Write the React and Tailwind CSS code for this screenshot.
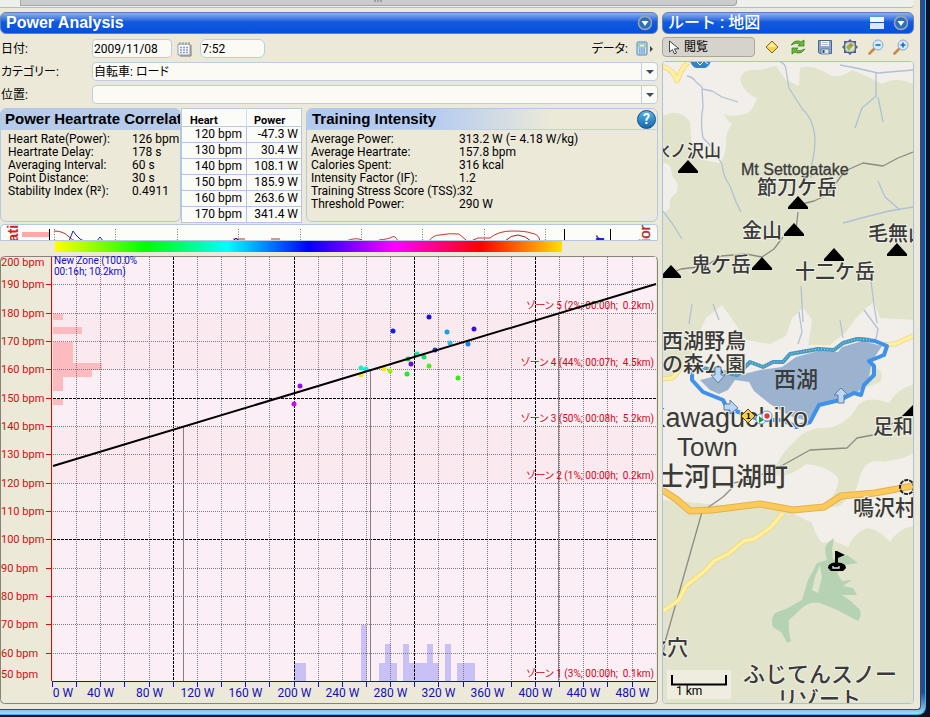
import React, { useState } from 'react';

const PLOT_LEFT = 52.5;
const PLOT_BOTTOM = 681.5;

const wattX = (w) => Math.floor(PLOT_LEFT + w * 1.2075) + 0.5;
const bpmY = (b) => Math.floor(PLOT_BOTTOM - (b - 50) * 2.833) + 0.5;

const correlation = [
  ['Heart Rate(Power):', '126 bpm'],
  ['Heartrate Delay:', '178 s'],
  ['Averaging Interval:', '60 s'],
  ['Point Distance:', '30 s'],
  ['Stability Index (R²):', '0.4911'],
];

const heartPower = [
  ['120 bpm', '-47.3 W'],
  ['130 bpm', '30.4 W'],
  ['140 bpm', '108.1 W'],
  ['150 bpm', '185.9 W'],
  ['160 bpm', '263.6 W'],
  ['170 bpm', '341.4 W'],
];

const intensity = [
  ['Average Power:', '313.2 W (= 4.18 W/kg)'],
  ['Average Heartrate:', '157.8 bpm'],
  ['Calories Spent:', '316 kcal'],
  ['Intensity Factor (IF):', '1.2'],
  ['Training Stress Score (TSS):', '32'],
  ['Threshold Power:', '290 W'],
];

// x, y, couleur
const points = [
  [429, 317, '#1a10d8'], [393, 331, '#0a20f0'], [447, 332, '#12a0e8'], [474, 329, '#3a10e0'],
  [450, 343, '#20c0e8'], [468, 344, '#1080e8'], [435, 350, '#1a40c8'], [417, 354, '#18e0a0'],
  [424, 357, '#18e070'], [408, 359, '#20c850'], [411, 364, '#6010e0'], [429, 366, '#50e820'],
  [407, 374, '#20e830'], [458, 378, '#30f010'], [361, 368, '#10f0c8'], [366, 369, '#10e8e0'],
  [361, 375, '#e0f010'], [384, 369, '#f8e810'], [390, 371, '#98f010'], [300, 386, '#9010e8'],
  [294, 404, '#c010f0'],
];

// y, hauteur, largeur
const heartBars = [
  [314, 6, 10], [327, 7, 29], [342, 21, 20], [363, 7, 49], [370, 7, 39], [377, 14, 10], [399, 6, 10],
];

// x, largeur, y
const powerBars = [
  [294, 12, 663], [361, 6, 625], [379, 18, 663], [385, 6, 644], [403, 36, 663],
  [403, 6, 644], [427, 6, 644], [445, 6, 644], [457, 18, 663],
];

const zones = [
  ['ゾーン', '5 (2%; 00:00h;  0.2km)', 309],
  ['ゾーン', '4 (44%; 00:07h;  4.5km)', 366],
  ['ゾーン', '3 (50%; 00:08h;  5.2km)', 422],
  ['ゾーン', '2 (1%; 00:00h;  0.2km)', 479],
  ['ゾーン', '1 (3%; 00:00h;  0.1km)', 677],
];

const peaks = [
  [688, 167], [798, 203], [794, 230], [762, 264], [671, 272], [834, 255], [897, 250],
];

const CircleArrow = () => (
  <svg width="16" height="16" viewBox="0 0 16 16">
    <circle cx="8" cy="8" r="6.5" fill="#2f6fb4" stroke="#9aa8b4" strokeWidth="1.5" />
    <path d="M4.5 6h7L8 11z" fill="#fff" />
  </svg>
);

const TitleBar = ({ children, actions }) => (
  <div className="flex h-[22px] items-center justify-between rounded-md border border-[#5f7fb8] bg-linear-to-b from-[#8fb0ee] via-[#1259dd] via-45% to-[#0650df] pr-1 pl-[5px] text-white">
    {children}
    <div className="flex items-center gap-[9px]">{actions}</div>
  </div>
);

const SelectField = ({ id, value, options, onChange }) => (
  <div className="relative flex-1">
    <select
      id={id}
      value={value}
      onChange={(e) => onChange(e.target.value)}
      className="block h-[19px] w-full appearance-none rounded-sm border border-[#bccfe2] bg-[#fbfaf5] px-px text-xs leading-4 text-black"
    >
      {options.map((o) => <option key={o}>{o}</option>)}
    </select>
    <span className="pointer-events-none absolute top-px right-px flex h-[17px] w-4 items-center justify-center border-l border-[#bccfe2]">
      <svg width="8" height="4" viewBox="0 0 8 4"><path d="M0 0h8L4 4z" fill="#3c4c68" /></svg>
    </span>
  </div>
);

const RideForm = () => {
  const [date, setDate] = useState('2009/11/08');
  const [time, setTime] = useState('7:52');
  const [category, setCategory] = useState('自転車: ロード');
  const [place, setPlace] = useState('');

  return (
    <form className="mt-[5px] flex flex-col gap-1 text-xs leading-4 [font-feature-settings:'palt']">
      <div className="flex h-[19px] items-center">
        <label htmlFor="date" className="w-[92px] pl-px">日付:</label>
        <input
          id="date"
          value={date}
          onChange={(e) => setDate(e.target.value)}
          className="h-[19px] w-20 rounded-sm border border-[#bccfe2] bg-[#fbfaf5] px-px"
        />
        <button type="button" aria-label="カレンダー" className="mx-[5px]">
          <svg width="18" height="16" viewBox="0 0 18 16">
            <path d="M1 3h12v11H1z" fill="#f6f8fc" stroke="#9a9a9a" />
            <path d="M14 4v11H3" fill="none" stroke="#777" />
            <path d="M3 1v3M6 1v3M9 1v3M12 1v3" stroke="#8d939c" />
            <path d="M3 6.5h8M3 9h8M3 11.5h8" stroke="#8a9fc8" strokeWidth="1.5" strokeDasharray="2 1" />
          </svg>
        </button>
        <input
          aria-label="時刻"
          value={time}
          onChange={(e) => setTime(e.target.value)}
          className="h-[19px] w-[65px] rounded-md border border-[#bccfe2] bg-[#fbfaf5] px-px"
        />
        <span className="ml-auto">データ:</span>
        <button type="button" aria-label="データ" className="mr-1 ml-2">
          <svg width="18" height="16" viewBox="0 0 18 16">
            <rect x="1" y="1" width="10" height="13" rx="1" fill="#c9e2f5" stroke="#4c86bd" />
            <rect x="3" y="3" width="6" height="3" fill="#eaf9ea" stroke="#4f9a6a" strokeWidth=".7" />
            <path d="M3 8h6M3 10h6M3 12h6" stroke="#3f73a9" strokeDasharray="1.5 .7" />
            <path d="M14 5v6l3-3z" fill="#444" />
          </svg>
        </button>
      </div>
      <div className="flex items-center">
        <label htmlFor="category" className="w-[92px] pl-px">カテゴリー:</label>
        <SelectField id="category" value={category} options={['自転車: ロード']} onChange={setCategory} />
      </div>
      <div className="flex items-center">
        <label htmlFor="place" className="w-[92px] pl-px">位置:</label>
        <SelectField id="place" value={place} options={['']} onChange={setPlace} />
      </div>
    </form>
  );
};

const StatPanels = () => (
  <div className="mt-1 flex h-[114px]">
    <section className="w-[181px] overflow-hidden rounded-md border border-[#b3c8e2]">
      <h2 className="h-[21px] bg-[#b5cbe9] pl-1 font-['Liberation_Sans',sans-serif] text-[15px] leading-5 font-bold whitespace-nowrap">
        Power Heartrate Correlation
      </h2>
      <dl className="mt-[3px] grid grid-cols-[124px_1fr] pl-[7px] text-xs leading-[13px] whitespace-nowrap">
        {correlation.map(([k, v]) => (
          <React.Fragment key={k}><dt>{k}</dt><dd>{v}</dd></React.Fragment>
        ))}
      </dl>
    </section>

    <table className="h-[114px] w-[121px] table-fixed border-collapse bg-[#fbfbf8] text-xs leading-[15px]">
      <thead>
        <tr className="border border-[#b9cbdf]">
          <th className="h-[18px] w-[65px] p-0 pt-[2px] pl-2 text-left"><div className="h-3 overflow-hidden text-[11px]">Heart</div></th>
          <th className="h-[18px] border-l border-[#d5dfea] p-0 pt-[2px] pl-[7px] text-left"><div className="h-3 overflow-hidden text-[11px]">Power</div></th>
        </tr>
      </thead>
      <tbody>
        {heartPower.map(([hr, w]) => (
          <tr key={hr} className="h-4 border border-[#b2c5e6] text-right">
            <td className="p-0 pr-1">{hr}</td>
            <td className="border-l border-[#b2c5e6] p-0 pr-[3px]">{w}</td>
          </tr>
        ))}
      </tbody>
    </table>

    <section className="ml-1 flex-1 overflow-hidden rounded-md border border-[#b3c8e2]">
      <div className="flex h-[21px] items-center justify-between border-b border-[#bdd0e6] bg-linear-to-r from-[#b3caf0] from-35% to-[#ece9d8] to-70% pr-px pl-[5px]">
        <h2 className="font-['Liberation_Sans',sans-serif] text-[15px] leading-5 font-bold">Training Intensity</h2>
        <button
          type="button"
          aria-label="ヘルプ"
          className="h-[19px] w-[19px] rounded-full border border-[#0c4d84] bg-linear-to-b from-[#5ab4e8] to-[#0e69ae] text-sm leading-4 font-bold text-white"
        >
          ?
        </button>
      </div>
      <dl className="mt-[3px] grid grid-cols-[148px_1fr] pl-1 text-xs leading-[13px] whitespace-nowrap">
        {intensity.map(([k, v]) => (
          <React.Fragment key={k}><dt>{k}</dt><dd>{v}</dd></React.Fragment>
        ))}
      </dl>
    </section>
  </div>
);

const OverviewStrip = () => (
  <div className="mt-[2px] overflow-hidden rounded-t-sm border border-[#b3c8e2] bg-[#fcfcf8]">
    <svg viewBox="1 225 656 15" className="block h-auto w-full font-['Liberation_Sans',sans-serif]">
      <text transform="translate(18 242) rotate(-90)" fontSize="15" fontWeight="bold" fill="#c22">ati</text>
      <rect x="22" y="232" width="27" height="5" fill="#fbaaa6" />
      <path d="M49.5 229v12M564.5 229v12M610.5 229v12" stroke="#000" />
      <path d="M54.5 229v12M115.5 229v12M177.5 229v12M238.5 229v12M300.5 229v12M361.5 229v12M422.5 229v12M484.5 229v12M545.5 229v12" stroke="#777" strokeDasharray="1 1.5" />
      <path d="M54 231q9 0 14 5t8 5M233 239h12M271 239h9" fill="none" stroke="#a33" />
      <path d="M69 241l4-10 3 4 4 4 4 2M97 241l3-4 3 4M233 241l3-3 3 3" fill="none" stroke="#22c" />
      <path d="M346 241q10-4 16-1M379 240q10-1 13-3t6 4M429 241q4-6 11-6 9-2 19-1l7 6M471 241l7-3h12q8-7 22-7 14 0 19 2 8 1 9 8" fill="none" stroke="#c33" />
      <path d="M505 241q6-6 13-6 8 1 13 6" fill="none" stroke="#922" />
      <text transform="translate(604 241) rotate(-90)" fontSize="15" fontWeight="bold" fill="#22c">r</text>
      <text transform="translate(650 242) rotate(-90)" fontSize="15" fill="#a33" stroke="#a33" strokeWidth=".4">ion</text>
    </svg>
  </div>
);

const ScatterChart = () => (
  <svg viewBox="0 256 658 448" className="block h-auto w-full font-[Roboto,'Noto_Sans_CJK_JP',sans-serif]">
    <rect x=".5" y="256.5" width="657" height="447" rx="4" fill="#ece9d8" stroke="#85837a" />
    <rect x="53" y="257" width="603" height="424" fill="#fbeff5" />
    <rect x="53" y="314" width="603" height="56" fill="#fae9ef" />
    <rect x="53" y="427" width="603" height="56" fill="#fae9ef" />

    {heartBars.map(([y, h, w]) => <rect key={y} x="53" y={y} width={w} height={h} fill="#fdbbc0" />)}
    {powerBars.map(([x, w, y]) => <rect key={`${x}-${w}`} x={x} y={y} width={w} height={681 - y} fill="#c9c1f6" />)}

    {/* grille */}
    <g shapeRendering="crispEdges">
      {Array.from({ length: 24 }, (_, i) => (i + 1) * 20).map((w) => (
        <path
          key={w}
          d={`M${wattX(w)} 257V681`}
          stroke={w % 100 ? '#83787e' : '#000'}
          strokeDasharray={w % 100 ? '1 1' : '3 1'}
        />
      ))}
      {Array.from({ length: 14 }, (_, i) => 60 + i * 10).map((b) => (
        <g key={b}>
          <path
            d={`M53 ${bpmY(b)}H656`}
            stroke={b % 50 ? '#83787e' : '#000'}
            strokeDasharray={b % 50 ? '1 1' : '3 1'}
          />
          <path d={`M46 ${bpmY(b)}h6`} stroke="#e00808" />
        </g>
      ))}
    </g>

    <path d="M183.5 427V681M370.5 370V681M558.5 313V681" stroke="#858085" />

    {points.map(([x, y, color]) => <circle key={`${x}-${y}`} cx={x} cy={y} r="2.5" fill={color} />)}
    {zones.map(([name, label, y]) => (
      <text key={label} x="654" y={y} textAnchor="end" fontSize="10" fill="#d00818" className="whitespace-pre [font-feature-settings:'palt']">
        {name} {label}
      </text>
    ))}
    <path d="M53 466L656 284" stroke="#000" strokeWidth="2" />

    <text fontSize="10" fill="#0a10c8">
      <tspan x="54" y="264">New Zone (100.0%</tspan>
      <tspan x="54" y="275">00:16h; 10.2km)</tspan>
    </text>

    <path d="M51.5 257V681" stroke="#e00808" />
    {Array.from({ length: 16 }, (_, i) => 50 + i * 10).map((b) => (
      <text key={b} x="1" y={b === 50 ? 678 : b === 200 ? 266 : bpmY(b) + 3} fontSize="11" fill="#d01010">{b} bpm</text>
    ))}

    <path d="M52 681.5H656" stroke="#1010c8" />
    {Array.from({ length: 25 }, (_, i) => i * 20).map((w) => (
      <path key={w} d={`M${wattX(w)} 681v6`} stroke="#1010c8" />
    ))}
    {Array.from({ length: 13 }, (_, i) => i * 40).map((w) => (
      <text key={w} x={w ? wattX(w) : 63} y="697" textAnchor="middle" fontSize="12" fill="#1010b8">{w} W</text>
    ))}
  </svg>
);

const MapToolbar = () => (
  <div className="mt-[3px] flex h-5 items-center">
    <button type="button" className="flex h-5 w-[93px] items-center gap-1 rounded-sm border border-[#aaa69c] bg-[#d6d3cc] pl-[5px] text-xs">
      <svg width="12" height="15" viewBox="0 0 12 15">
        <path d="M1.5 1v11l3-2.5 2 4.5 2-1-2-4.2H11z" fill="#fff" stroke="#444" />
      </svg>
      閲覧
    </button>
    <div className="ml-[9px] flex flex-1 items-center justify-between pr-[5px]">
      <button type="button" aria-label="マーカー">
        <svg width="16" height="16" viewBox="0 0 16 16"><path d="M8 2L14 8 8 14 2 8z" fill="#fbd44e" stroke="#80652a" /><path d="M8 3.5L12 8 4 8z" fill="#fff0a0" /></svg>
      </button>
      <button type="button" aria-label="更新">
        <svg width="18" height="16" viewBox="0 0 18 16">
          <path d="M2 6q3-5 8-4l2 1 3-2v6H9l2-2Q7 3 2 6z" fill="#6db83c" stroke="#38821c" strokeWidth=".8" />
          <path d="M16 10q-3 5-8 4l-2-1-3 2V9h6l-2 2q4 2 9-1z" fill="#6db83c" stroke="#38821c" strokeWidth=".8" />
        </svg>
      </button>
      <button type="button" aria-label="保存">
        <svg width="16" height="16" viewBox="0 0 16 16">
          <path d="M1.5 1.5h13v13h-12l-1-1z" fill="#8da6cb" stroke="#4c658c" />
          <path d="M4 2h8v5H4z" fill="#f4f7fb" /><path d="M5 3.5h6M5 5.5h6" stroke="#9aa8bd" strokeWidth=".7" />
          <path d="M4 10h8v5H4z" fill="#dbe4f0" stroke="#4c658c" strokeWidth=".7" /><path d="M5.5 11h2v3h-2z" fill="#3f5274" />
        </svg>
      </button>
      <button type="button" aria-label="表示範囲">
        <svg width="16" height="16" viewBox="0 0 16 16">
          <path d="M8 0l3 3-3 1-3-1zM8 16l3-3-3-1-3 1zM0 8l3-3 1 3-1 3zM16 8l-3-3-1 3 1 3zM2 2h4L2 6zM14 2h-4l4 4zM2 14h4l-4-4zM14 14h-4l4-4z" fill="#4a58a8" />
          <circle cx="8" cy="8" r="5" fill="#dfe6b4" stroke="#8a9a6c" strokeWidth=".7" />
          <path d="M4 8l4-4 4 2-3 3-2 3z" fill="#7dbb60" /><circle cx="9" cy="6" r="1.500" fill="#e0773c" />
        </svg>
      </button>
      <button type="button" aria-label="縮小">
        <svg width="16" height="16" viewBox="0 0 16 16">
          <path d="M1.5 14.5L6 10" stroke="#c98a4c" strokeWidth="2.6" strokeLinecap="round" />
          <circle cx="10" cy="6" r="5" fill="#d5ebfb" stroke="#86a9c8" /><path d="M7.5 6h5" stroke="#2467b4" strokeWidth="1.6" />
        </svg>
      </button>
      <button type="button" aria-label="拡大">
        <svg width="16" height="16" viewBox="0 0 16 16">
          <path d="M1.5 14.5L6 10" stroke="#c98a4c" strokeWidth="2.6" strokeLinecap="round" />
          <circle cx="10" cy="6" r="5" fill="#d5ebfb" stroke="#86a9c8" /><path d="M7.5 6h5M10 3.5v5" stroke="#2467b4" strokeWidth="1.6" />
        </svg>
      </button>
    </div>
  </div>
);

const RouteMap = () => (
  <div className="mt-1 overflow-hidden rounded-sm border border-[#aac0dc]">
    <svg viewBox="663 62 250 641" className="block h-auto w-full font-['Noto_Sans_CJK_JP',sans-serif]">
      <rect x="662" y="61" width="252" height="643" fill="#e1e4cb" />

      {/* zones habitées */}
      <g fill="#f2efea">
        <path d="M662 61H914V84Q895 76 882 84 868 76 852 70 838 80 828 74 812 64 800 68L799 86 786 80 776 66 758 70Q744 68 740 78 742 92 757 98 754 108 748 113 734 118 724 114 728 122 732 124 725 132 726 146 724 160 719 163L704 160 692 146 690 122Q684 112 672 113L662 116z" />
        <path d="M662 163Q672 162 672 176 681 184 676 193 668 198 670 208L662 214z" />
        <path d="M662 382L688 366 694 344 706 318 722 305 734 322 746 340 770 344 786 336 792 318 803 308 812 320 808 345 830 345 846 332 856 318 866 308 874 302 880 318 914 320V384Q896 390 889 403 868 395 858 405 846 427 824 428 806 427 792 444 778 456 773 475 790 478 806 464 828 466 838 478 840 488 826 506 790 512 662 500z" />
        <path d="M860 476Q866 457 884 462L903 458 914 453V526Q898 528 890 542 880 530 868 528 854 532 848 547L834 541 822 543Q815 534 812 523L790 512 840 506 856 490z" />
      </g>
      <path d="M662 320l22-6 8 15-6 14-10 8-14 4zM850 372q10-10 22-6 14 4 8 16l-20 8z" fill="#e1e4cb" />

      {/* rivières */}
      <g fill="none" stroke="#afc1d4" strokeWidth="1.3" strokeLinejoin="round">
        <path d="M687 76q6 1 9 6l6 5 1 20q-3 14 0 31l8 8 11 18q1 12 8 22l6 16 5 10M702 89l10 2 10 6 16 5M778 61q8 2 8 9l3 18 14 22q10 8 12 28 0 14-3 25l-1 15" />
        <path d="M840 65l16 3 22 5 35-3M876 72v24l-14 12-7 20M878 97l5 25M878 181l7 16 15 13M913 207l-24 4-20 5-26 7M662 210l10 13 10 16M801 286l2 36M871 281l3 24 3 18M692 304l-3 20M713 304l6 16M798 344l4-12-3-20M840 320l3 18M864 310l14 19-2 10" />
      </g>
      <g fill="none" stroke="#8b8c80" strokeWidth="1.3" strokeLinejoin="round">
        <path d="M913 152l-15 6-15 8-20-3-18 8-18 24-13 6-12 3M798 212l-2 18M783 237l-9 12-12 8-16-3-25 2-15 10-25 3-10 4" />
        <path d="M907 413l-12 9-22 13-16 3-10 10-37 2-27 15-34 15-16 3-1 5-9 9-13 9-8 6-37 130-2 13" />
      </g>

      {/* routes */}
      <g fill="none" strokeLinejoin="round">
        <path d="M662 66q12 4 15 15q5-15 12-19M662 379l10-1 6-6 2-7 12-1M880 345l15-1 18-8M783 513l-13 15-16 11-10 2-16 13-14 7-8 9-20 16-7 14-16 11" stroke="#eed779" strokeWidth="5" />
        <path d="M662 66q12 4 15 15q5-15 12-19M662 379l10-1 6-6 2-7 12-1M880 345l15-1 18-8M783 513l-13 15-16 11-10 2-16 13-14 7-8 9-20 16-7 14-16 11" stroke="#fff0a0" strokeWidth="3.5" />
        <path d="M662 490l14 9 14 12 22-1 48-6 33 6 31-3 17-11 34-3 38-7" stroke="#e5b14b" strokeWidth="7" />
        <path d="M662 490l14 9 14 12 22-1 48-6 33 6 31-3 17-11 34-3 38-7" stroke="#fbca5b" strokeWidth="5" />
      </g>

      {/* lac et parc */}
      <path d="M700 380l10 10 9 4 9-4 7-10 14 2 5 9 16 13 20 12 17 5 10-9 5-9 20-4 16-7 10-11 4-20 10-15-20-5-20 6-4 5-20-1-22 6-14 10-22 3-16 4-12-1-20 4z" fill="#9bb3ce" />
      <path
        d="M834 538Q824 544 825 552L827 560 817 563 808 580 802 600 788 608 775 613Q770 620 773 627L782 633 787 643 791 641Q788 630 789 620L803 607Q812 601 820 603L837 610 858 621Q862 616 860 610L852 602 842 595 857 595 853 588 843 586 852 580 842 581 837 573 845 565 858 563 847 555 833 560 832 550zM820 565L822 577 818 593 812 590 815 577z"
        fill="#b5d2b2"
        fillRule="evenodd"
      />

      {/* tracé */}
      <path d="M692 367v13l11 12 20 8 4 8 20 7 13 5h23l13 7 14-5 9-17 21-5 14-7 7 2 3-10 10-10v-9l-5-5 15-6 3-9-12-5-17-2" fill="none" stroke="#3f92ec" strokeWidth="4" strokeLinejoin="round" />
      <path d="M870 340l-13-1-14 4-9 7-16-1-28 5-7 8-10 0-10 5-13-5-13 13-20-4-14-3-11-1" fill="none" stroke="#4399c8" strokeWidth="4" strokeLinejoin="round" />
      <path d="M870 340l-13-1-14 4-9 7-16-1-28 5-7 8-10 0-10 5-13-5-13 13-20-4-14-3-11-1" fill="none" stroke="#c8dc80" strokeWidth="1" strokeDasharray="1 2" />

      <g fill="#3a3a3a" stroke="#f1f0e6" strokeWidth="2" paintOrder="stroke" fontWeight="500">
        <text x="721" y="157" textAnchor="end" fontSize="17">水ノ沢山</text>
        <text x="741" y="175" fontSize="16" fontFamily="Liberation Sans" stroke="#3a3a3a" strokeWidth=".3">Mt Settogatake</text>
        <text x="757" y="195" fontSize="20">節刀ケ岳</text>
        <text x="742" y="238" fontSize="20">金山</text>
        <text x="868" y="241" fontSize="20">毛無山</text>
        <text x="691" y="272" fontSize="20">鬼ケ岳</text>
        <text x="795" y="279" fontSize="20">十二ケ岳</text>
        <text x="662" y="348" fontSize="21">西湖野鳥</text>
        <text x="662" y="371" fontSize="21">の森公園</text>
        <text x="774" y="387" fontSize="22" stroke="none">西湖</text>
        <text x="808" y="427" textAnchor="end" fontSize="27" fontFamily="Liberation Sans">Kawaguchiko</text>
        <text x="677" y="456" fontSize="26" fontFamily="Liberation Sans">Town</text>
        <text x="788" y="486" textAnchor="end" fontSize="26">富士河口湖町</text>
        <text x="873" y="434" fontSize="20">足和田山</text>
        <text x="853" y="515" fontSize="21">鳴沢村</text>
        <text x="688" y="655" textAnchor="end" fontSize="21">氷穴</text>
        <text x="743" y="682" fontSize="22">ふじてんスノー</text>
        <text x="777" y="706" fontSize="21">リゾート</text>
      </g>

      {peaks.map(([x, y]) => <path key={`${x}-${y}`} d={`M${x - 10} ${y + 6}v-2l10-11 10 11v2z`} fill="#000" />)}
      <path d="M902 416l12-12v12z" fill="#000" />
      <circle cx="907" cy="487" r="7" fill="none" stroke="#222" strokeWidth="2" strokeDasharray="4 1" />
      <g>
        <path d="M828 568q0-5 7-5.5V551h2l8 4-7 3v4.5q8 .5 8 5.500l-3 3h-12z" fill="#000" />
        <path d="M833 566v2h6v-2" stroke="#e8eee0" fill="none" strokeWidth="1.300" />
      </g>

      <g fill="#b9d7f8" stroke="#657b98" strokeWidth="1">
        <path d="M715 367h6v8h4l-7 8-7-8h4zM838 403v-8h-4l7-7 7 7h-4v8zM724 404h6v-4l8 8-8 6v-4h-6z" />
      </g>
      <path d="M748 409l7 7-7 7-7-7z" fill="#f7cf49" stroke="#554422" />
      <text x="746" y="419" fontSize="8" fontWeight="bold">1</text>
      <circle cx="761" cy="419" r="5" fill="#fff" stroke="#5a9ce0" />
      <path d="M759 416v7l5-3z" fill="#1e9d2c" />
      <circle cx="767" cy="416" r="5" fill="#fff" stroke="#5a9ce0" />
      <circle cx="767" cy="416" r="2.700" fill="#e33a33" />

      <rect x="667" y="670" width="64" height="29" fill="#eeeddf" />
      <path d="M672 675v9.500h54V675" fill="none" stroke="#000" strokeWidth="2" />
      <text x="676" y="695" fontSize="12" fontFamily="Roboto">1 km</text>
      <path d="M690 61q2 6 6 7h9q4-1 6-7z" fill="#2f85c5" />
      <path d="M696 61l4 4 4-4 4 3" stroke="#fff" fill="none" />
    </svg>
  </div>
);

const App = () => (
  <div className="min-h-screen bg-[#071226] pr-1 pb-0.5">
    <div className="rounded-br-lg border-r border-b border-[#35b5ec] bg-linear-to-t from-[#9fdcf8] from-0% to-[#244f94] to-3% pr-1 pb-1">
      <div className="rounded-br-sm border-r border-b border-[#3c4c74] bg-[#ece9d8] font-[Roboto,'Noto_Sans_CJK_JP',sans-serif] text-black">
        <div className="mr-1.5 flex h-2 rounded-br-sm border-b border-[#aebbd0] bg-[#efefec]">
          <div className="w-5" />
          <div className="flex h-1.5 flex-1 items-start justify-center rounded-br-sm border border-t-0 border-[#a5a5a5] bg-[#cbcbcd] text-[#777]">
            <svg width="9" height="2"><path d="M1 0v2M4 0v2M7 0v2" stroke="currentColor" /></svg>
          </div>
          <div className="w-[177px]" />
        </div>

        <div className="flex items-start gap-1 pt-1 pr-1.5 pb-[5px]">
          <main className="min-w-0 flex-1">
            <TitleBar actions={<button type="button" aria-label="パネルメニュー"><CircleArrow /></button>}>
              <h1 className="font-['Liberation_Sans',sans-serif] text-base leading-5 font-bold">Power Analysis</h1>
            </TitleBar>
            <RideForm />
            <StatPanels />
            <OverviewStrip />
            <div className="mb-1 h-[11px] pl-[55px]">
              <div className="h-[11px] w-[84%] bg-[linear-gradient(to_right,#ffff00_0%,#00ff00_18%,#00ffff_34%,#0000ff_50%,#ff00ff_67%,#ff0000_84%,#ffe000_100%)]" />
            </div>
            <ScatterChart />
          </main>

          <aside className="w-[252px] shrink-0">
            <TitleBar
              actions={
                <>
                  <button type="button" aria-label="分割">
                    <svg width="14" height="12" viewBox="0 0 14 12">
                      <path d="M0 0h14v5H0z" fill="#f4f7fd" /><path d="M0 6h14v6H0z" fill="#dfe8f8" />
                    </svg>
                  </button>
                  <button type="button" aria-label="地図メニュー"><CircleArrow /></button>
                </>
              }
            >
              <h1 className="text-base leading-5 font-medium">ルート : 地図</h1>
            </TitleBar>
            <MapToolbar />
            <RouteMap />
          </aside>
        </div>
      </div>
    </div>
  </div>
);

export default App;
